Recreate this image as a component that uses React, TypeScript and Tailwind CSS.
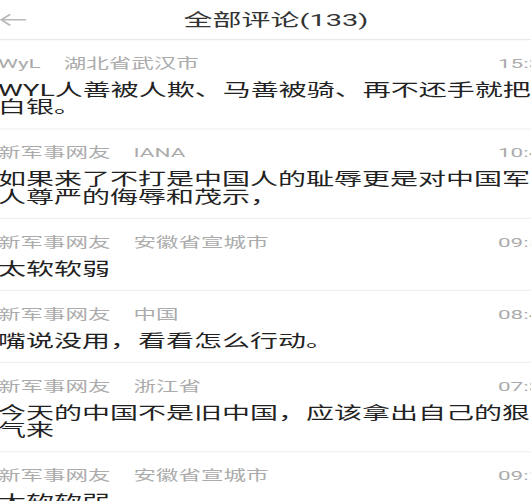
import React from 'react';

type Comment = {
  author: string;
  place: string;
  time: string;
  text: string;
};

const comments: Comment[] = [
  { author: 'WyL', place: '湖北省武汉市', time: '15:32', text: 'WYL人善被人欺、马善被骑、再不还手就把白银。' },
  { author: '新军事网友', place: 'IANA', time: '10:47', text: '如果来了不打是中国人的耻辱更是对中国军人尊严的侮辱和茂示，' },
  { author: '新军事网友', place: '安徽省宣城市', time: '09:58', text: '太软软弱' },
  { author: '新军事网友', place: '中国', time: '08:41', text: '嘴说没用，看看怎么行动。' },
  { author: '新军事网友', place: '浙江省', time: '07:36', text: '今天的中国不是旧中国，应该拿出自己的狠气来' },
  { author: '新军事网友', place: '安徽省宣城市', time: '09:12', text: '太软软弱' },
];

const BackArrow = () => (
  <svg width="26" height="24" viewBox="0 0 26 24" fill="none" stroke="#b8b8b8" strokeWidth="2.4" strokeLinecap="round" strokeLinejoin="round">
    <path d="M25 12H1.5" />
    <path d="M9.5 3.5L1.5 12L9.5 20.5" />
  </svg>
);

const App = () => {
  return (
    <div className="w-[531px] h-[501px] overflow-hidden bg-white">
      {/* the shot is squashed vertically, so the page is laid out tall and scaled down */}
      <div className="w-[580px] ml-[-14px] origin-top scale-y-[0.6] font-['Roboto','Noto_Sans_CJK_SC',sans-serif]">

        {/* Header */}
        <div className="h-[67px] grid grid-cols-[1fr_auto_1fr] items-center border-b-2 border-[#e8e8e8] px-[14px]">
          <BackArrow />
          <span className="text-[29px] leading-[36px] text-[#333]">全部评论(133)</span>
          <span />
        </div>

        {/* Comments */}
        {comments.map((c, i) => (
          <div key={i} className="px-[12px] pt-[23px] pb-[20.5px] border-b-2 border-[#f0f0f0]">
            <div className="flex items-center justify-between text-[22.5px] leading-[30px] text-[#ababab]">
              <div className="flex gap-[23px]">
                <span>{c.author}</span>
                <span>{c.place}</span>
              </div>
              <span>{c.time}</span>
            </div>
            <p className="mt-[15.5px] text-[28px] leading-[29px] text-[#222]">{c.text}</p>
          </div>
        ))}

      </div>
    </div>
  );
};

export default App;
